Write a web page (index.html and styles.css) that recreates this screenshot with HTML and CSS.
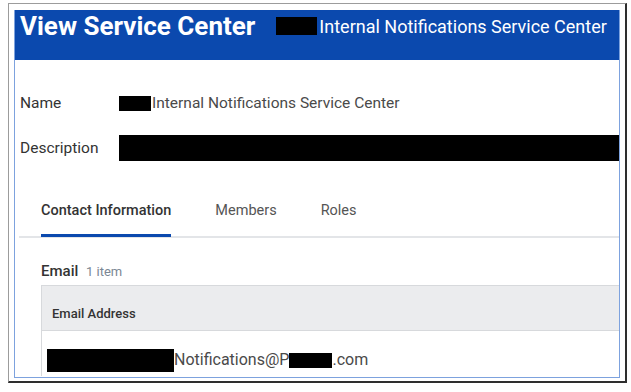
FILE: index.html
```html
<!DOCTYPE html>
<html lang="en">
<head>
  <meta charset="UTF-8" />
  <meta name="viewport" content="width=device-width, initial-scale=1" />
  <title>View Service Center</title>
  <link rel="stylesheet" href="styles.css">
</head>
<body>
  <div class="frame">
    <div class="panel">
      <header class="title-bar">
        <h1>View Service Center</h1>
        <span class="subtitle"><span class="redact r-title"></span>Internal Notifications Service Center</span>
      </header>

      <dl class="fields">
        <div class="field">
          <dt>Name</dt>
          <dd><span class="redact r-name"></span>Internal Notifications Service Center</dd>
        </div>
        <div class="field">
          <dt>Description</dt>
          <dd><span class="redact r-desc"></span></dd>
        </div>
      </dl>

      <nav class="tabs">
        <a class="tab active">Contact Information</a>
        <a class="tab">Members</a>
        <a class="tab">Roles</a>
      </nav>

      <section class="email">
        <h2>Email <span class="count">1 item</span></h2>
        <table class="grid">
          <thead>
            <tr><th>Email Address</th></tr>
          </thead>
          <tbody>
            <tr><td><span class="redact r-user"></span>Notifications@P<span class="redact r-domain"></span>.com</td></tr>
          </tbody>
        </table>
      </section>
    </div>
  </div>
</body>
</html>
```

FILE: styles.css
```css
:root {
  --font-sans: Roboto, 'Liberation Sans', Arial, sans-serif;
  --blue: #0b49ae;
  --panel-border: #7da2de;
  --text-dark: #333;
  --text-mid: #4a4a4a;
  --text-muted: #7b8794;
  --line: #e3e5e8;
  --head-bg: #ebecee;
}
*, *::before, *::after { box-sizing: border-box; }

html, body {
  margin: 0;
  padding: 0;
  background: #fff;
  font-family: var(--font-sans);
  color: var(--text-dark);
}

.frame {
  width: 619px;
  height: 380px;
  margin: 3px 0 0 8px;
  padding: 6px 5px 3px 5px;
  border-top: 1px solid #9c9c9c;
  border-left: 1px solid #9c9c9c;
  border-right: 2px solid #2e2e2e;
  border-bottom: 2px solid #2e2e2e;
}
.panel {
  height: 100%;
  border: 1px solid var(--panel-border);
  border-top: none;
  overflow: hidden;
}

.title-bar {
  display: flex;
  align-items: baseline;
  height: 50px;
  margin: 0 -1px;
  padding: 0 0 0 6px;
  background: var(--blue);
  color: #fff;
  white-space: nowrap;
}
.title-bar h1 {
  margin: 0;
  font-size: 26px;
  line-height: 30px;
  font-weight: 700;
  padding-top: 1px;
}
.subtitle {
  display: flex;
  align-items: center;
  margin-left: 21px;
  font-size: 18px;
}

.redact {
  display: inline-block;
  background: #000;
  vertical-align: middle;
}
.r-title { width: 41px; height: 18px; margin-right: 2px; }
.r-name { width: 32px; height: 15px; margin-right: 1px; }
.r-desc { width: 520px; height: 26px; }
.r-user { width: 127px; height: 23px; }
.r-domain { width: 43px; height: 15px; }

.fields {
  margin: 0;
  padding: 30px 0 0 5px;
  display: grid;
  gap: 19px;
}
.field {
  display: flex;
  align-items: center;
  height: 26px;
  font-size: 15.5px;
}
.field dt {
  width: 99px;
  flex: none;
  color: var(--text-dark);
}
.field dd {
  margin: 0;
  display: flex;
  align-items: center;
  white-space: nowrap;
  color: var(--text-mid);
}

.tabs {
  display: flex;
  gap: 44px;
  margin: 41px 0 0 4px;
  padding-left: 22px;
  border-bottom: 2px solid var(--line);
}
.tab {
  padding-bottom: 14px;
  font-size: 14.5px;
  line-height: 18px;
  color: #555;
  border-bottom: 3px solid transparent;
  margin-bottom: -1px;
}
.tab.active {
  font-weight: 500;
  color: var(--text-dark);
  border-bottom-color: var(--blue);
}

.email {
  padding: 24px 0 0 26px;
}
.email h2 {
  margin: 0;
  font-size: 15px;
  line-height: 18px;
  font-weight: 500;
  color: var(--text-dark);
}
.count {
  margin-left: 4px;
  font-size: 13px;
  font-weight: 400;
  color: var(--text-muted);
}

.grid {
  width: 620px;
  margin-top: 4px;
  border-collapse: collapse;
  font-size: 16px;
}
.grid th {
  height: 45px;
  padding: 18px 0 8px 10px;
  text-align: left;
  font-size: 13px;
  font-weight: 500;
  color: var(--text-dark);
  background: var(--head-bg);
  border: 1px solid #d7d9dc;
}
.grid td {
  padding: 18px 0 4px 5px;
  color: var(--text-mid);
  border-left: 1px solid #d7d9dc;
  white-space: nowrap;
}
.grid td .redact { vertical-align: middle; }
```
